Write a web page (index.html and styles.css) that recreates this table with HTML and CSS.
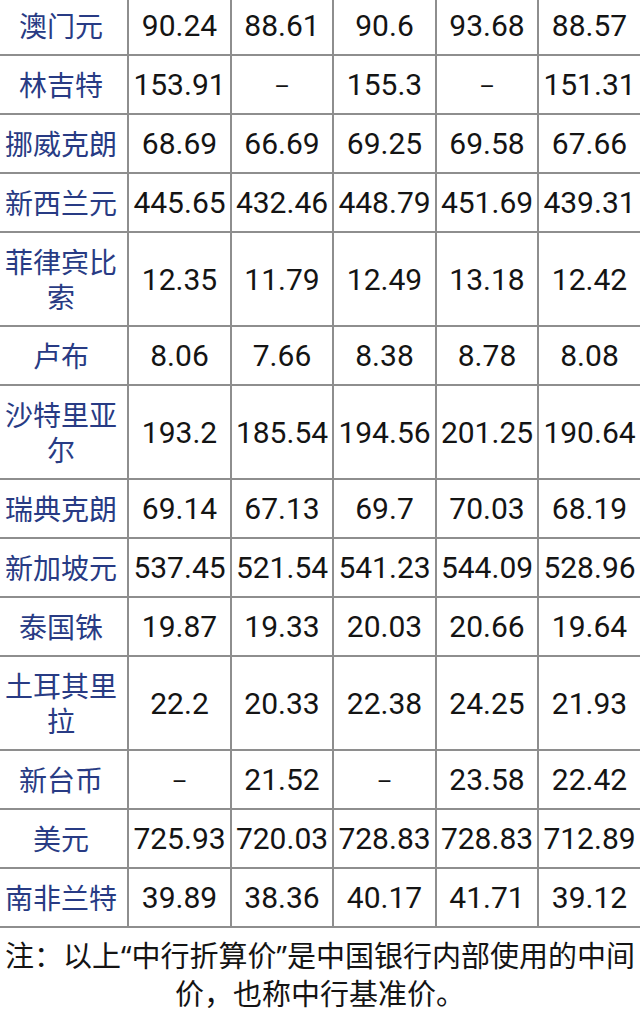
FILE: index.html
```html
<!DOCTYPE html>
<html lang="zh-CN">
<head>
<meta charset="utf-8">
<title>中行折算价</title>
<link rel="stylesheet" href="styles.css">
</head>
<body>
<div class="page">
<table class="rates">
<colgroup>
<col class="c-name"><col class="c-a"><col class="c-b"><col class="c-a"><col class="c-b"><col class="c-a">
</colgroup>
<tbody>
<tr><th>澳门元</th><td>90.24</td><td>88.61</td><td>90.6</td><td>93.68</td><td>88.57</td></tr>
<tr><th>林吉特</th><td>153.91</td><td><span class="dash">–</span></td><td>155.3</td><td><span class="dash">–</span></td><td>151.31</td></tr>
<tr><th>挪威克朗</th><td>68.69</td><td>66.69</td><td>69.25</td><td>69.58</td><td>67.66</td></tr>
<tr><th>新西兰元</th><td>445.65</td><td>432.46</td><td>448.79</td><td>451.69</td><td>439.31</td></tr>
<tr><th>菲律宾比索</th><td>12.35</td><td>11.79</td><td>12.49</td><td>13.18</td><td>12.42</td></tr>
<tr><th>卢布</th><td>8.06</td><td>7.66</td><td>8.38</td><td>8.78</td><td>8.08</td></tr>
<tr><th>沙特里亚尔</th><td>193.2</td><td>185.54</td><td>194.56</td><td>201.25</td><td>190.64</td></tr>
<tr><th>瑞典克朗</th><td>69.14</td><td>67.13</td><td>69.7</td><td>70.03</td><td>68.19</td></tr>
<tr><th>新加坡元</th><td>537.45</td><td>521.54</td><td>541.23</td><td>544.09</td><td>528.96</td></tr>
<tr><th>泰国铢</th><td>19.87</td><td>19.33</td><td>20.03</td><td>20.66</td><td>19.64</td></tr>
<tr><th>土耳其里拉</th><td>22.2</td><td>20.33</td><td>22.38</td><td>24.25</td><td>21.93</td></tr>
<tr><th>新台币</th><td><span class="dash">–</span></td><td>21.52</td><td><span class="dash">–</span></td><td>23.58</td><td>22.42</td></tr>
<tr><th>美元</th><td>725.93</td><td>720.03</td><td>728.83</td><td>728.83</td><td>712.89</td></tr>
<tr><th>南非兰特</th><td>39.89</td><td>38.36</td><td>40.17</td><td>41.71</td><td>39.12</td></tr>
</tbody>
</table>
<p class="note">注：以上<span class="q">“</span>中行折算价<span class="q">”</span>是中国银行内部使用的中间价，也称中行基准价。</p>
</div>
</body>
</html>
```

FILE: styles.css
```css
html, body {
  margin: 0;
  padding: 0;
  background: #ffffff;
  overflow: hidden;
}

.page {
  width: 640px;
  overflow: hidden;
}

.rates {
  border-collapse: collapse;
  table-layout: fixed;
  width: 649px;
  margin-top: -5px;
  margin-left: -9px;
}

.c-name { width: 136px; }
.c-a { width: 103px; }
.c-b { width: 102px; }

.rates th,
.rates td {
  border: 2px solid #8e8e8e;
  padding: 11px 0;
  line-height: 35px;
  text-align: center;
  vertical-align: middle;
}

.rates th {
  font-family: "Noto Sans CJK SC", sans-serif;
  font-weight: 400;
  font-size: 28px;
  color: #283b84;
  padding-left: 6px;
  padding-right: 4px;
}

.rates td {
  font-family: Roboto, "Noto Sans", sans-serif;
  font-size: 30px;
  color: #141414;
  white-space: nowrap;
}

.dash {
  font-size: 24px;
  line-height: 1;
}

.note {
  margin: 8px 0 0;
  font-family: "Noto Sans CJK SC", sans-serif;
  font-size: 29px;
  line-height: 36px;
  color: #141414;
  text-align: center;
}

.note .q {
  font-family: "Noto Sans", sans-serif;
}
```
